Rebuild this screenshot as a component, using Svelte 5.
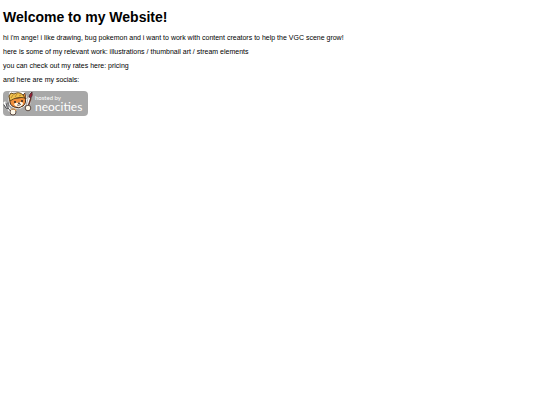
<script>
	const intro = "hi i'm ange! i like drawing, bug pokemon and i want to work with content creators to help the VGC scene grow!";
</script>

<main>
	<h1>Welcome to my Website!</h1>

	<p>{intro}</p>
	<p>here is some of my relevant work: illustrations / thumbnail art / stream elements</p>
	<p>you can check out my rates here: pricing</p>
	<p>and here are my socials:</p>

	<a class="badge" href="#neocities" aria-label="hosted by neocities">
		<svg class="cat" viewBox="0 0 32 25" aria-hidden="true">
			<!-- white edge behind the cat -->
			<path d="M6 9 L7 1 L11 2 L17 1 L22 2 L24 8 L22 14 L18 17 L11 17 L7 14 Z" fill="#fff" stroke="#fff" stroke-width="1" />
			<!-- fork -->
			<path d="M2 12 L5 17 L9 22" stroke="#fff" stroke-width="3" stroke-linecap="round" />
			<path d="M1 14 L3 17 L5 18 L5 12 M3 12 L4 16 M5 17 L9 22" stroke="#4c4c50" stroke-width="1" stroke-linecap="round" />
			<!-- brush -->
			<path d="M28 3 L25 16" stroke="#fff" stroke-width="3" stroke-linecap="round" />
			<path d="M28 7 L25 16" stroke="#65382d" stroke-width="1.6" />
			<path d="M26 6 Q26 3 29 1 Q30 4 28 7 Z" fill="#9b2036" stroke="#3b2024" stroke-width="0.8" />
			<!-- face -->
			<path d="M7 8 Q6 14 11 16 Q16 18 20 15 Q24 12 22 6 Z" fill="#f08f3c" stroke="#3f2a20" stroke-width="1" />
			<path d="M11 13 Q13 11 15 12 Q18 10 20 12 Q20 15 16 16 Q12 16 11 13" fill="#fff8e8" />
			<!-- ears and hat -->
			<path d="M19 5 L22 2 L23 8 Z" fill="#f08f3c" stroke="#3f2a20" stroke-width="0.8" />
			<path d="M7 10 L6 5 L8 2 L11 3 Q16 0 20 4 L22 7 Q14 5 7 10 Z" fill="#f1c14c" stroke="#6a4a1b" stroke-width="1" />
			<path d="M8 7 L10 4 M12 6 L14 3 M16 5 L18 4" stroke="#a8782b" stroke-width="0.8" />
			<circle cx="12" cy="11" r="1" fill="#2a2220" />
			<circle cx="19" cy="10" r="1" fill="#2a2220" />
			<path d="M15 12 L17 12 L16 13 Z M14 14 Q16 15 18 13" stroke="#432e29" stroke-width="0.8" />
			<!-- paws -->
			<circle cx="10" cy="21" r="3" fill="#fff8e8" stroke="#4d3b34" stroke-width="0.9" />
			<path d="M8 19 Q9 17 12 18 L13 20" stroke="#f4a84d" stroke-width="1" />
			<circle cx="25" cy="17" r="2.8" fill="#fff8e8" stroke="#4d3b34" stroke-width="0.9" />
		</svg>
		<span class="label">
			<span class="hosted">hosted by</span>
			<span class="name">neocities</span>
		</span>
	</a>
</main>

<style>
	:global(body) {
		background: #fff;
		color: #000;
		font-family: "Liberation Sans", Arial, sans-serif;
		font-size: 7px;
		line-height: 8px;
	}
	main {
		padding: 9px 3px;
	}
	h1 {
		margin: 0 0 9px;
		font-size: 14px;
		line-height: 16px;
	}
	p {
		margin: 0 0 6px;
	}
	.badge {
		display: flex;
		width: 85px;
		height: 25px;
		margin-top: 7px;
		border-radius: 4px;
		background: #a8a8a8;
		color: #fff;
		text-decoration: none;
	}
	.cat {
		flex: none;
		width: 32px;
		height: 25px;
		fill: none;
	}
	.label {
		display: flex;
		flex-direction: column;
		padding-top: 3px;
		font-family: Lato, "Open Sans", sans-serif;
	}
	.hosted {
		font-size: 6px;
		line-height: 7px;
	}
	.name {
		font-size: 12px;
		line-height: 12px;
	}
</style>
